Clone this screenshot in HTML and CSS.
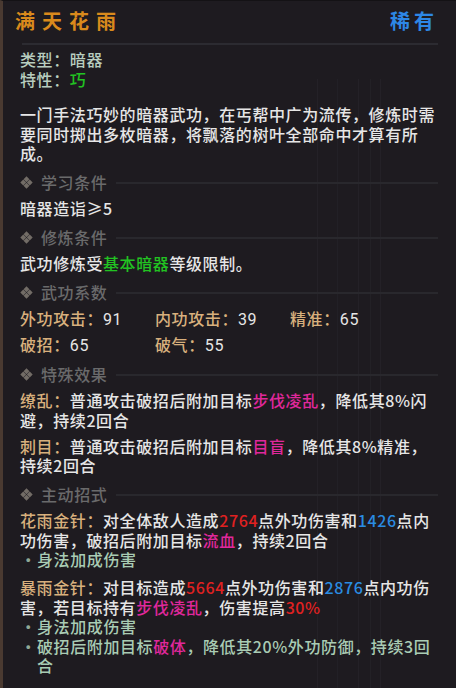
FILE: index.html
```html
<!DOCTYPE html>
<html>
  <head>
    <meta charset="UTF-8">
    <title>满天花雨</title>
    <link rel="stylesheet" href="styles.css">
  </head>
  <body>
    <div class="card">
      <header class="card-head">
        <h1 class="name">满天花雨</h1>
        <span class="rarity">稀有</span>
      </header>

      <div class="meta">
        <p>类型：暗器</p>
        <p>特性：<span class="green">巧</span></p>
      </div>

      <p class="desc">一门手法巧妙的暗器武功，在丐帮中广为流传，修炼时需要同时掷出多枚暗器，将飘落的树叶全部命中才算有所成。</p>

      <section class="sect">
        <h2 class="sect-title">
          <svg class="dia" viewBox="0 0 12 12"><path d="M6 0.3L8.7 3 6 5.7 3.3 3zM3 3.3L5.7 6 3 8.7 0.3 6zM9 3.3L11.7 6 9 8.7 6.3 6zM6 6.3L8.7 9 6 11.7 3.3 9z"/></svg>
          学习条件
        </h2>
        <p>暗器造诣≥5</p>
      </section>

      <section class="sect">
        <h2 class="sect-title">
          <svg class="dia" viewBox="0 0 12 12"><path d="M6 0.3L8.7 3 6 5.7 3.3 3zM3 3.3L5.7 6 3 8.7 0.3 6zM9 3.3L11.7 6 9 8.7 6.3 6zM6 6.3L8.7 9 6 11.7 3.3 9z"/></svg>
          修炼条件
        </h2>
        <p>武功修炼受<span class="green">基本暗器</span>等级限制。</p>
      </section>

      <section class="sect">
        <h2 class="sect-title">
          <svg class="dia" viewBox="0 0 12 12"><path d="M6 0.3L8.7 3 6 5.7 3.3 3zM3 3.3L5.7 6 3 8.7 0.3 6zM9 3.3L11.7 6 9 8.7 6.3 6zM6 6.3L8.7 9 6 11.7 3.3 9z"/></svg>
          武功系数
        </h2>
        <div class="stats">
          <div><span class="tan">外功攻击：</span><span class="num">91</span></div>
          <div><span class="tan">内功攻击：</span><span class="num">39</span></div>
          <div><span class="tan">精准：</span><span class="num">65</span></div>
          <div><span class="tan">破招：</span><span class="num">65</span></div>
          <div><span class="tan">破气：</span><span class="num">55</span></div>
        </div>
      </section>

      <section class="sect">
        <h2 class="sect-title">
          <svg class="dia" viewBox="0 0 12 12"><path d="M6 0.3L8.7 3 6 5.7 3.3 3zM3 3.3L5.7 6 3 8.7 0.3 6zM9 3.3L11.7 6 9 8.7 6.3 6zM6 6.3L8.7 9 6 11.7 3.3 9z"/></svg>
          特殊效果
        </h2>
        <p class="entry"><span class="tan">缭乱：</span>普通攻击破招后附加目标<span class="pink">步伐凌乱</span>，降低其8%闪避，持续2回合</p>
        <p class="entry"><span class="tan">刺目：</span>普通攻击破招后附加目标<span class="pink">目盲</span>，降低其8%精准，持续2回合</p>
      </section>

      <section class="sect">
        <h2 class="sect-title">
          <svg class="dia" viewBox="0 0 12 12"><path d="M6 0.3L8.7 3 6 5.7 3.3 3zM3 3.3L5.7 6 3 8.7 0.3 6zM9 3.3L11.7 6 9 8.7 6.3 6zM6 6.3L8.7 9 6 11.7 3.3 9z"/></svg>
          主动招式
        </h2>
        <div class="entry">
          <p><span class="tan">花雨金针：</span>对全体敌人造成<span class="red">2764</span>点外功伤害和<span class="blue">1426</span>点内功伤害，破招后附加目标<span class="pink">流血</span>，持续2回合</p>
          <ul class="bullets">
            <li><span class="dot">·</span><span>身法加成伤害</span></li>
          </ul>
        </div>
        <div class="entry">
          <p><span class="tan">暴雨金针：</span>对目标造成<span class="red">5664</span>点外功伤害和<span class="blue">2876</span>点内功伤害，若目标持有<span class="pink">步伐凌乱</span>，伤害提高<span class="red">30%</span></p>
          <ul class="bullets">
            <li><span class="dot">·</span><span>身法加成伤害</span></li>
            <li><span class="dot">·</span><span>破招后附加目标<span class="pink">破体</span>，降低其20%外功防御，持续3回合</span></li>
          </ul>
        </div>
      </section>
    </div>
  </body>
</html>
```

FILE: styles.css
```css
html, body {
  margin: 0;
  padding: 0;
  background: #1e1b20;
}
body {
  font-family: "Noto Sans CJK SC", "Noto Sans", sans-serif;
  font-size: 16px;
  font-weight: 500;
  line-height: 19.5px;
  letter-spacing: 0.6px;
  color: #e6e6e6;
}
p, h1, h2, ul {
  margin: 0;
  padding: 0;
}

.card {
  box-sizing: border-box;
  width: 456px;
  height: 688px;
  padding: 0 18px 0 17px;
  border-left: 3px solid #4a3a31;
  border-top: 1px solid #141215;
  background-color: #1e1b20;
  background-image:
    linear-gradient(to right,
      transparent 314px, #242127 314px, #242127 315px,
      transparent 315px, transparent 334px, #222026 334px, #222026 335px,
      transparent 335px, transparent 355px, #242127 355px, #242127 356px,
      transparent 356px, transparent 367px, #232126 367px, #232126 368px,
      transparent 368px, transparent 377px, #242127 377px, #242127 378px,
      transparent 378px);
  background-position: 0 78px;
  background-repeat: no-repeat;
  overflow: hidden;
}

/* title bar */
.card-head {
  display: flex;
  justify-content: space-between;
  align-items: center;
  height: 42px;
  margin-left: 2px;
  border-bottom: 2px solid #2c2b31;
}
.name,
.rarity {
  font-size: 20px;
  font-weight: 700;
  line-height: 20px;
  margin-top: -3px;
}
.name {
  color: #d98a1c;
  letter-spacing: 7px;
  margin-left: -7px;
}
.rarity {
  color: #2d87e6;
  letter-spacing: 4px;
}

.meta {
  margin-top: 4px;
  color: #b8cdbf;
  line-height: 20px;
}
.desc {
  margin-top: 16px;
}

/* section headings with a rule after them */
.sect {
  margin-top: 9.5px;
}
.sect-title {
  display: flex;
  align-items: center;
  font-size: 16px;
  font-weight: 500;
  color: #6a6a6b;
  margin-bottom: 6.5px;
}
.sect-title::after {
  content: "";
  flex: 1;
  height: 2px;
  margin-left: 9px;
  background: #29282d;
}
.dia {
  width: 13px;
  height: 13px;
  margin-right: 8px;
  fill: #726c66;
}

.stats {
  display: grid;
  grid-template-columns: 135px 135px auto;
  row-gap: 5.5px;
  margin-bottom: 5px;
}
.num {
  font-family: Roboto, "Noto Sans", sans-serif;
  font-weight: 400;
}
.entry + .entry {
  margin-top: 6.5px;
}
.sect:last-child .entry + .entry {
  margin-top: 8.5px;
}

.bullets {
  list-style: none;
  color: #a9ccb4;
}
.bullets li {
  display: flex;
}
.dot {
  flex: 0 0 17px;
  text-align: center;
  color: #8fa898;
}

.green { color: #22c322; }
.tan { color: #d8b07d; }
.pink { color: #e0289c; }
.red { color: #e02121; }
.blue { color: #2a8ce2; }
```
